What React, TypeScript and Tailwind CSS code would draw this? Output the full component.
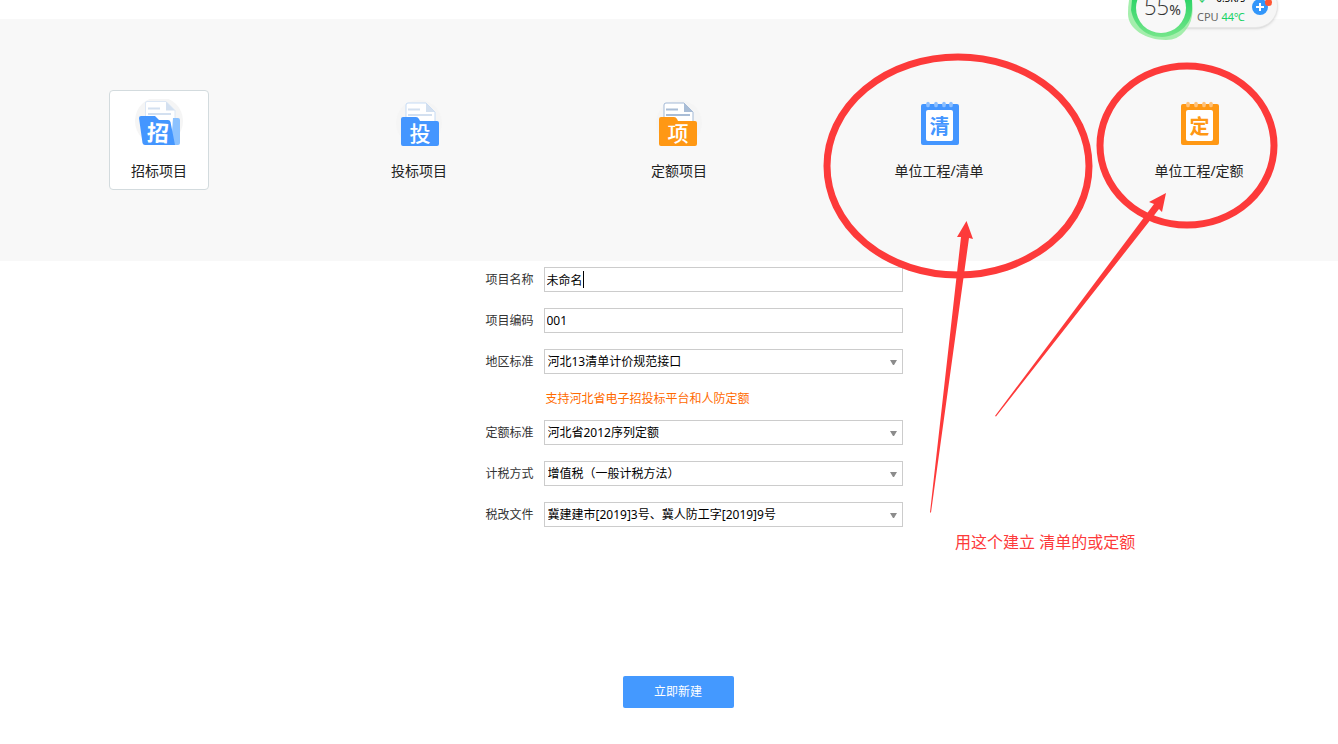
import { useState, type ReactNode } from "react";

const iconFont = '"Noto Sans CJK SC", sans-serif';

function FolderIcon({ glyph, x, body, edge, shade }: { glyph: string; x: number; body: string; edge: string; shade: string }) {
  return (
    <svg width="48" height="48" viewBox="0 0 48 48" aria-hidden="true">
      <circle cx="24" cy="24" r="23" fill="#f5f5f5" />
      <g transform={`translate(${x} 0)`}>
        <path d="M11 6Q11 4 13 4H31L40 13V34H11Z" fill="#fff" stroke={edge} />
        <path d="M31 4V13H40Z" fill={shade} />
        <path d="M13 10.500H25M13 16H37" stroke={shade} strokeWidth="2" />
        <path d="M6 20Q6 18 8 18H21Q23 18 24 20L25 22H42Q44 22 44 24V45Q44 47 42 47H8Q6 47 6 45Z" fill={body} />
        <text x="25" y="42" textAnchor="middle" fontSize="21" fontWeight="500" fill="#fff" fontFamily={iconFont}>
          {glyph}
        </text>
      </g>
    </svg>
  );
}

function OpenFolderIcon() {
  return (
    <svg width="48" height="48" viewBox="0 0 48 48" aria-hidden="true">
      <circle cx="24" cy="22" r="24" fill="#f5f5f5" />
      <path d="M10.500 4Q10.500 2.500 12 2.500H31L40 11.500V40H10.500Z" fill="#fff" stroke="#dce7f5" />
      <path d="M31 2.500V11.500H40Z" fill="#d3e0f0" />
      <path d="M13 9.500H25M13 15H36" stroke="#d3e0f0" strokeWidth="2" />
      <path d="M38 19H43Q45 19 45 21V44Q45 46 43 46H36Z" fill="#8cc2ff" />
      <path d="M4 19Q4 17 6 17H20L24 21H33Q35 21 35.500 23L40 46H10Q8 46 7.500 44Z" fill="#4496ff" />
      <text x="23" y="42" textAnchor="middle" fontSize="22" fontWeight="700" fill="#fff" fontFamily={iconFont} transform="rotate(3 23 34)">
        招
      </text>
    </svg>
  );
}

function NotepadIcon({ glyph, color, ring }: { glyph: string; color: string; ring: string }) {
  return (
    <svg width="48" height="48" viewBox="0 0 48 48" aria-hidden="true">
      <rect x="6" y="5" width="38" height="41" rx="2" fill={color} />
      <rect x="11" y="11" width="27" height="31" rx="2" fill="#fff" />
      {[13, 21, 29, 36].map((x) => (
        <ellipse key={x} cx={x} cy="5.500" rx="2" ry="2.700" fill={ring} />
      ))}
      <text x="24.500" y="34.500" textAnchor="middle" fontSize="20" fontWeight="700" fill={color} fontFamily={iconFont}>
        {glyph}
      </text>
    </svg>
  );
}

const projectTypes: { name: string; icon: ReactNode }[] = [
  { name: "招标项目", icon: <OpenFolderIcon /> },
  { name: "投标项目", icon: <FolderIcon glyph="投" x={0} body="#4496ff" edge="#c5dbf5" shade="#d3e0f0" /> },
  { name: "定额项目", icon: <FolderIcon glyph="项" x={-2} body="#ff9814" edge="#a3b9d6" shade="#a9bdd6" /> },
  { name: "单位工程/清单", icon: <NotepadIcon glyph="清" color="#4496ff" ring="#8cbfff" /> },
  { name: "单位工程/定额", icon: <NotepadIcon glyph="定" color="#ff9814" ring="#ffc27a" /> },
];

function Row({ id, label, children }: { id: string; label: string; children: ReactNode }) {
  return (
    <div className="flex items-center gap-[10px]">
      <label htmlFor={id} className="w-12 shrink-0 whitespace-nowrap text-[#333]">
        {label}
      </label>
      <div className="relative h-[25px] flex-1">{children}</div>
    </div>
  );
}

function SelectRow({ id, label, value }: { id: string; label: string; value: string }) {
  return (
    <Row id={id} label={label}>
      <select id={id} className="block h-full w-full appearance-none border border-[#ccc] bg-white px-[3px] text-black outline-none">
        <option>{value}</option>
      </select>
      <svg className="pointer-events-none absolute right-[6px] top-[11px]" width="7" height="5" viewBox="0 0 7 5" aria-hidden="true">
        <path d="M0 0H7L4 5H3Z" fill="#8c8c8c" />
      </svg>
    </Row>
  );
}

function SystemMonitor() {
  return (
    <div className="absolute right-[60px] top-0 h-11 w-[150px]">
      <div className="absolute bottom-4 left-8 right-0 top-[-16px] rounded-r-full border border-[#e6e6e6] bg-[#f6f6f6] shadow" />
      <svg className="absolute left-0 top-0" width="66" height="42" viewBox="0 0 66 42" aria-hidden="true">
        <defs>
          <linearGradient id="gauge" x1="0" y1="0" x2="0" y2="1">
            <stop offset="0" stopColor="#30d468" />
            <stop offset="1" stopColor="#74e68a" />
          </linearGradient>
        </defs>
        <path d="M1 0H64Q67 20 57 31Q50 40 38 40C18 40 0 29 0 14Q0 6 1 0Z" fill="#8eeb98" opacity="0.8" />
        <path d="M4 0H64V10C63 25 50 36 34 37C18 37 6 26 3 10Z" fill="url(#gauge)" />
        <circle cx="33" cy="8" r="25" fill="#f8f8f8" />
      </svg>
      <div className="absolute left-4 top-[-8px] flex items-baseline leading-7 text-[#333]">
        <span className='font-["Open_Sans"] text-[22px] font-light leading-7'>55</span>
        <span className="text-sm">%</span>
      </div>
      <div className="absolute left-[69px] top-[-10px] flex w-12 justify-between whitespace-nowrap text-[10px] leading-4 text-black">
        <span className="text-[#19c95b]">↓</span>
        <span>0.5K/s</span>
      </div>
      <div className="absolute left-[69px] top-[9px] whitespace-nowrap text-[11px] leading-4 text-[#666]">
        CPU <span className="text-[#19d366]">44℃</span>
      </div>
      <svg className="absolute right-0 top-0" width="26" height="18" viewBox="0 0 26 18" aria-hidden="true">
        <circle cx="8" cy="7" r="8" fill="#3296fa" />
        <path d="M8 3V11M4 7H12" stroke="#fff" strokeWidth="2" />
        <circle cx="16.500" cy="2.500" r="3.500" fill="#ff5533" />
      </svg>
    </div>
  );
}

function Annotations() {
  return (
    <div className="pointer-events-none absolute right-0 top-0 h-[560px] w-[538px]">
      <svg width="538" height="560" viewBox="800 0 538 560" aria-hidden="true">
        <g fill="none" stroke="#fd3a3a" strokeWidth="7">
          <ellipse cx="958" cy="166" rx="131" ry="109" />
          <ellipse cx="1187" cy="145.500" rx="87" ry="79.500" />
        </g>
        <g fill="#fd3a3a">
          <path d="M966.500 221L973 239L969 238L931 512.500H930L961 237L957 237Z" />
          <path d="M1166 193L1162 212L1159 209L996 416.500L995 416L1154 204L1149 202Z" />
        </g>
      </svg>
      <p className="absolute left-[155px] top-[530px] whitespace-nowrap text-base leading-6 text-[#fd3a3a]">
        用这个建立 清单的或定额
      </p>
    </div>
  );
}

export default function App() {
  const [selected, setSelected] = useState(0);
  const [name, setName] = useState("未命名");
  const [code, setCode] = useState("001");

  return (
    <div className='relative min-h-screen overflow-hidden bg-white pt-[19px] font-["Noto_Sans","Noto_Sans_CJK_SC",sans-serif] text-xs'>
      <nav className="grid grid-cols-5 justify-items-center bg-[#f8f8f8] pb-[71px] pl-[29px] pr-[9px] pt-[71px]">
        {projectTypes.map((type, i) => (
          <button
            key={type.name}
            type="button"
            aria-pressed={i === selected}
            onClick={() => setSelected(i)}
            className={
              i === selected
                ? "flex h-[100px] w-[100px] flex-col items-center gap-[14px] whitespace-nowrap rounded border border-[#d3dbde] bg-white pt-2 text-sm text-[#222]"
                : "flex h-[100px] w-[100px] flex-col items-center gap-[14px] whitespace-nowrap rounded border border-transparent pt-2 text-sm text-[#222]"
            }
          >
            {type.icon}
            <span>{type.name}</span>
          </button>
        ))}
      </nav>

      <main className="flex flex-col items-center pb-9 pl-[29px] pr-[11px] pt-[6px]">
        <form className="flex flex-col items-center gap-[149px]" onSubmit={(e) => e.preventDefault()}>
          <div className="ml-8 flex w-[417px] flex-col gap-4">
            <Row id="name" label="项目名称">
              <input
                id="name"
                value={name}
                onChange={(e) => setName(e.target.value)}
                className="block h-full w-full border border-[#ccc] px-[2px] text-black outline-none"
              />
              <span className="absolute left-[39px] top-1 h-[17px] w-px bg-black" />
            </Row>
            <Row id="code" label="项目编码">
              <input
                id="code"
                value={code}
                onChange={(e) => setCode(e.target.value)}
                className="block h-full w-full border border-[#ccc] px-[2px] text-black outline-none"
              />
            </Row>
            <div>
              <SelectRow id="region" label="地区标准" value="河北13清单计价规范接口" />
              <p className="pb-[13px] pl-[60px] pt-[17px] leading-4 text-[#ff6a00]">支持河北省电子招投标平台和人防定额</p>
              <div className="flex flex-col gap-4">
                <SelectRow id="quota" label="定额标准" value="河北省2012序列定额" />
                <SelectRow id="tax" label="计税方式" value="增值税（一般计税方法）" />
                <SelectRow id="file" label="税改文件" value="冀建建市[2019]3号、冀人防工字[2019]9号" />
              </div>
            </div>
          </div>
          <button type="submit" className="h-8 w-[111px] rounded-xs bg-[#4499ff] text-white">
            立即新建
          </button>
        </form>
      </main>

      <SystemMonitor />
      <Annotations />
    </div>
  );
}
